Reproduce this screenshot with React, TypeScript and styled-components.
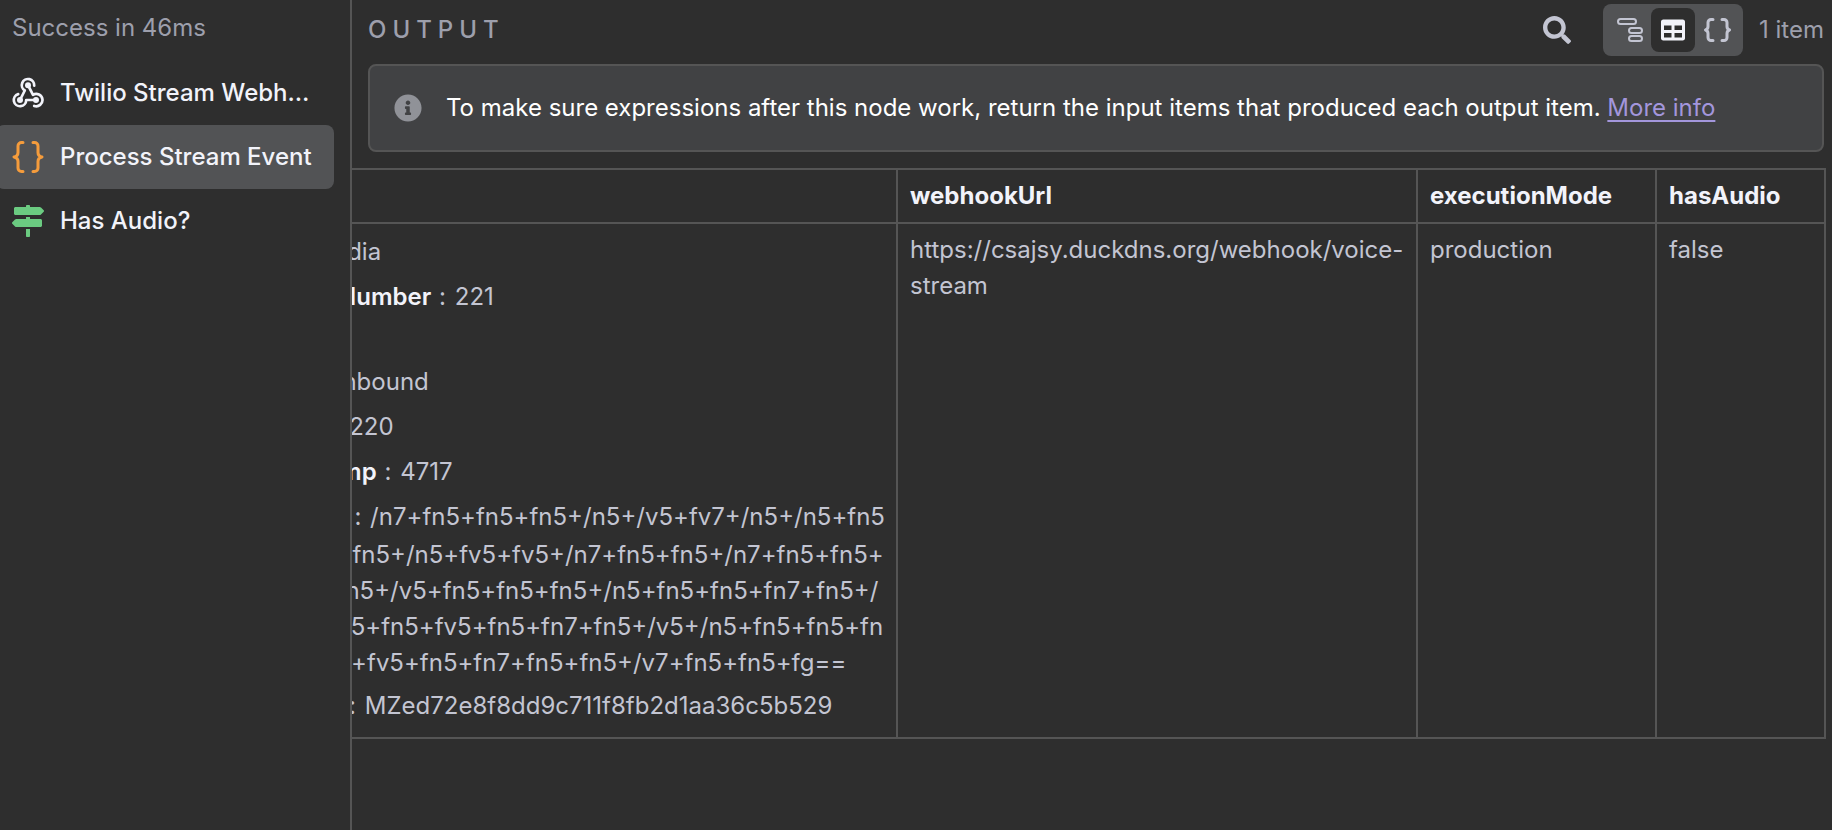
import React from "react";
import styled, { createGlobalStyle } from "styled-components";
import { FaSearch, FaInfoCircle, FaMapSigns, FaTable } from "react-icons/fa";

const color = {
  bg: "#2e2e2e",
  line: "#555555",
  raised: "#525355",
  callout: "#414244",
  strong: "#f2f3fa",
  text: "#c3c5d2",
  muted: "#9d9fac",
  link: "#a396dc",
  orange: "#f59c3c",
  green: "#6bcb81",
};

const GlobalStyle = createGlobalStyle`
  * { box-sizing: border-box; }
  body {
    margin: 0;
    background: ${color.bg};
    color: ${color.text};
    font-family: Inter, "Liberation Sans", sans-serif;
    font-size: 24px;
    line-height: 36px;
  }
  button { font: inherit; color: inherit; border: 0; background: none; padding: 0; cursor: pointer; }
`;

const Page = styled.div`
  display: flex;
  min-height: 100vh;
`;

const Sidebar = styled.nav`
  flex: 0 0 352px;
  min-width: 0;
  border-right: 2px solid ${color.line};
  padding: 10px 16px 0 0;
`;

const Status = styled.p`
  margin: 0 0 15px;
  padding-left: 12px;
  color: ${color.muted};
`;

const NodeButton = styled.button<{ $active?: boolean }>`
  && {
    display: flex;
    align-items: center;
    gap: 16px;
    width: calc(100% + 4px);
    height: 64px;
    margin-left: -4px;
    padding: 0 20px 0 16px;
    border-radius: 8px;
    background: ${(p) => (p.$active ? color.raised : "transparent")};
    color: ${color.strong};
    font-weight: 500;
    text-align: left;
  }
  svg { flex: none; }
`;

const NodeName = styled.span`
  flex: 1;
  min-width: 0;
  overflow: hidden;
  text-overflow: ellipsis;
  white-space: nowrap;
`;

const Panel = styled.main`
  flex: 1;
  min-width: 0;
`;

const Header = styled.header`
  display: flex;
  align-items: center;
  height: 60px;
  padding: 0 8px 0 16px;
  margin-bottom: 4px;
`;

const Title = styled.h1`
  flex: 1;
  margin: 0;
  color: ${color.muted};
  font-size: 24px;
  font-weight: 500;
  letter-spacing: 6px;
`;

const SearchButton = styled.button`
  && {
    display: flex;
    margin-right: 32px;
    color: ${color.text};
  }
`;

const Toggle = styled.div`
  display: flex;
  padding: 4px;
  margin-right: 16px;
  border-radius: 8px;
  background: ${color.raised};
`;

const ToggleButton = styled.button<{ $active?: boolean }>`
  && {
    display: flex;
    align-items: center;
    justify-content: center;
    width: 44px;
    height: 44px;
    border-radius: 8px;
    background: ${(p) => (p.$active ? color.bg : "transparent")};
    color: ${(p) => (p.$active ? color.strong : color.text)};
  }
`;

const Count = styled.span`
  color: ${color.muted};
`;

const Callout = styled.div`
  display: flex;
  align-items: center;
  gap: 24px;
  margin: 0 8px 16px 16px;
  padding: 24px;
  border: 2px solid ${color.line};
  border-radius: 8px;
  background: ${color.callout};
  color: #ffffff;
  svg { flex: none; color: #909298; }
`;

const InfoLink = styled.a`
  color: ${color.link};
  text-decoration: underline;
  text-decoration-thickness: 2px;
  text-decoration-skip-ink: none;
  text-underline-offset: 4px;
`;

const TableView = styled.div`
  display: flex;
  justify-content: flex-end;
  overflow: hidden;
  padding-right: 6px;
`;

const DataTable = styled.table`
  flex: none;
  table-layout: fixed;
  width: 1617px;
  border-collapse: collapse;
  th, td {
    border: 2px solid ${color.line};
    text-align: left;
    vertical-align: top;
  }
  th {
    padding: 8px 12px;
    color: ${color.strong};
    font-weight: 700;
  }
  td {
    padding: 8px 10px 6px 12px;
    overflow-wrap: anywhere;
  }
`;

const Tree = styled.ul`
  list-style: none;
  margin: 0;
  padding: 0;
`;

const Entry = styled.li`
  margin-bottom: 5px;
  padding-left: 30px;
  text-indent: -29px;
  word-break: break-all;
`;

const Nested = styled(Tree)`
  margin-top: 4px;
`;

const Key = styled.span<{ $group?: boolean }>`
  color: ${color.strong};
  font-weight: 600;
  line-height: ${(p) => (p.$group ? 36 : 40)}px;
`;

const Colon = styled.span`
  margin: 0 2px 0 1px;
`;

const WebhookIcon = () => (
  <svg width="32" height="32" viewBox="0 0 32 32" fill="none" stroke={color.strong} strokeWidth="2.700" strokeLinecap="round" strokeLinejoin="round">
    <path d="M22.200 8.600a6.200 6.200 0 1 0-9.400 4.900L8 23" />
    <path d="M16 8.200l5 9.600a6.200 6.200 0 1 1 1.200 11.100" />
    <path d="M6.200 17.100a6.200 6.200 0 1 0 8 5.900H24" />
    <g fill={color.strong} stroke="none">
      <circle cx="16" cy="8.200" r="3" />
      <circle cx="8" cy="23" r="3" />
      <circle cx="24" cy="23" r="3" />
    </g>
  </svg>
);

const CodeIcon = () => (
  <svg width="32" height="32" viewBox="0 0 32 32" fill="none" stroke={color.orange} strokeWidth="3" strokeLinecap="round" strokeLinejoin="round">
    <path d="M11 1.500H9.500a3.500 3.500 0 0 0-3.500 3.500v6.500c0 2.500-1.500 4-4 4.500 2.500.5 4 2 4 4.500v6.500a3.500 3.500 0 0 0 3.500 3.500H11" />
    <path d="M21 1.500h1.500a3.500 3.500 0 0 1 3.500 3.500v6.500c0 2.500 1.500 4 4 4.500-2.500.5-4 2-4 4.500v6.500a3.500 3.500 0 0 1-3.500 3.500H21" />
  </svg>
);

const JsonIcon = () => (
  <svg width="28" height="24" viewBox="0 0 28 24" fill="none" stroke="currentColor" strokeWidth="3" strokeLinecap="round" strokeLinejoin="round">
    <path d="M10 1.500H8A3 3 0 0 0 5 4.500v4c0 2-1 3-2.500 3.500 1.500.5 2.500 1.500 2.500 3.500v4a3 3 0 0 0 3 3h2" />
    <path d="M19 1.500h2a3 3 0 0 1 3 3v4c0 2 1 3 2.500 3.500-1.500.5-2.500 1.500-2.500 3.500v4a3 3 0 0 1-3 3h-2" />
  </svg>
);

const SchemaIcon = () => (
  <svg width="28" height="28" viewBox="0 0 28 28" fill="none" stroke="currentColor" strokeWidth="2">
    <rect x="3" y="3" width="18" height="5" rx="2.500" />
    <rect x="14" y="12" width="13" height="5" rx="2.500" />
    <rect x="14" y="20" width="13" height="5" rx="2.500" />
  </svg>
);

const payload =
  "/n7+fn5+fn5+fn5+/n5+/v5+fv7+/n5+/n5+fn5" +
  "+fn5+fn5+/n5+fv5+fv5+/n7+fn5+fn5+/n7+fn5+fn5+" +
  "fn5+fn5+/v5+fn5+fn5+fn5+/n5+fn5+fn5+fn7+fn5+/" +
  "n5+fn5+fn5+fv5+fn5+fn7+fn5+/v5+/n5+fn5+fn5+fn" +
  "5+fn5+fv5+fn5+fn7+fn5+fn5+/v7+fn5+fn5+fg==";

const Field = ({ name, value }: { name: string; value: string }) => (
  <Entry>
    <Key>{name}</Key> <Colon>:</Colon> {value}
  </Entry>
);

export default function App() {
  return (
    <Page>
      <GlobalStyle />
      <Sidebar>
        <Status>Success in 46ms</Status>
        <NodeButton>
          <WebhookIcon />
          <NodeName>Twilio Stream Webhook</NodeName>
        </NodeButton>
        <NodeButton $active>
          <CodeIcon />
          <NodeName>Process Stream Event</NodeName>
        </NodeButton>
        <NodeButton>
          <FaMapSigns size={32} color={color.green} />
          <NodeName>Has Audio?</NodeName>
        </NodeButton>
      </Sidebar>
      <Panel>
        <Header>
          <Title>OUTPUT</Title>
          <SearchButton aria-label="Search output">
            <FaSearch size={28} />
          </SearchButton>
          <Toggle>
            <ToggleButton aria-label="Schema"><SchemaIcon /></ToggleButton>
            <ToggleButton aria-label="Table" $active><FaTable size={24} /></ToggleButton>
            <ToggleButton aria-label="JSON"><JsonIcon /></ToggleButton>
          </Toggle>
          <Count>1 item</Count>
        </Header>
        <Callout>
          <FaInfoCircle size={28} />
          <span>
            To make sure expressions after this node work, return the input items that produced each output item.{" "}
            <InfoLink href="#more-info">More info</InfoLink>
          </span>
        </Callout>
        <TableView>
          <DataTable>
            <colgroup>
              <col />
              <col width="520" />
              <col width="239" />
              <col width="169" />
            </colgroup>
            <thead>
              <tr>
                <th>body</th>
                <th>webhookUrl</th>
                <th>executionMode</th>
                <th>hasAudio</th>
              </tr>
            </thead>
            <tbody>
              <tr>
                <td>
                  <Tree>
                    <Field name="event" value="media" />
                    <Field name="sequenceNumber" value="221" />
                    <Entry>
                      <Key $group>media</Key> <Colon>:</Colon>
                      <Nested>
                        <Field name="track" value="inbound" />
                        <Field name="chunk" value="220" />
                        <Field name="timestamp" value="4717" />
                        <Field name="payload" value={payload} />
                      </Nested>
                    </Entry>
                    <Field name="streamSid" value="MZed72e8f8dd9c711f8fb2d1aa36c5b529" />
                  </Tree>
                </td>
                <td>https://csajsy.duckdns.org/webhook/voice-stream</td>
                <td>production</td>
                <td>false</td>
              </tr>
            </tbody>
          </DataTable>
        </TableView>
      </Panel>
    </Page>
  );
}
